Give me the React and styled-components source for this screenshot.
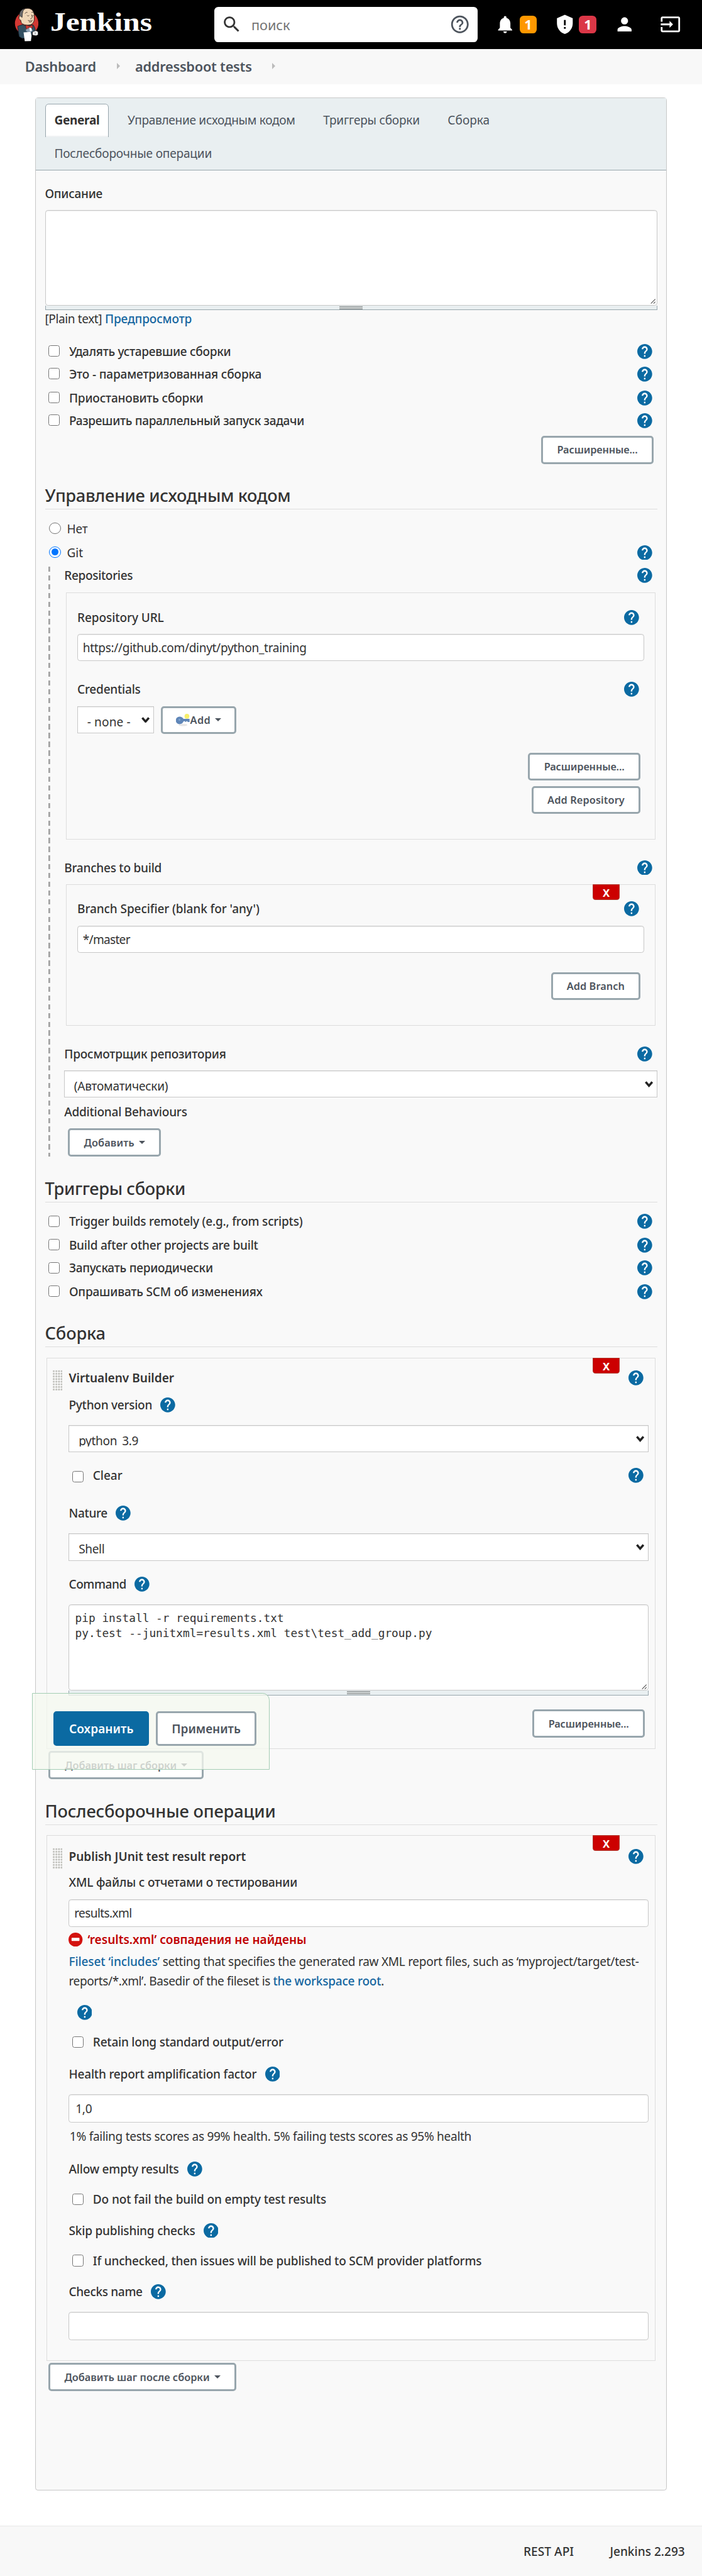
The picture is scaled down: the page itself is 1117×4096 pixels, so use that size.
import React from 'react';
import styled, { createGlobalStyle, css } from 'styled-components';

const u = (n) => `${+(n * 0.69815).toFixed(3)}px`;

const color = {
  text: '#333',
  muted: '#4d545d',
  link: '#1566a0',
  primary: '#0b6aa2',
  line: '#ddd',
  field: '#c8c8c8',
  steel: '#98a6ad',
  danger: '#c00000',
  panel: '#f9f9f9',
  tabs: '#e9eff1',
};

const GlobalStyle = createGlobalStyle`
  *, *::before, *::after { box-sizing: border-box; }
  body {
    margin: 0;
    background: #fff;
    color: ${color.text};
    font-family: "Noto Sans", "Open Sans", sans-serif;
  }
`;

/* ---------- text ---------- */

const Text = styled.span`
  font-size: ${(p) => u((p.$size || 28) * 0.975)};
  font-weight: ${(p) => p.$weight || 400};
  letter-spacing: ${(p) => p.$ls || 0}px;
  color: ${(p) => p.$color || 'inherit'};
  white-space: pre;
`;

const LabelText = styled(Text)`
  line-height: ${u(37)};
`;

const Label = ({ ls, weight = 500, children }) => (
  <LabelText $weight={weight} $ls={ls}>{children}</LabelText>
);

/* ---------- icons ---------- */

const Icon = styled.svg`
  display: block;
  flex: none;
  width: ${(p) => u(p.$w || 48)};
  height: ${(p) => u(p.$h || p.$w || 48)};
  fill: ${(p) => p.$fill || '#fff'};
`;

const HelpGlyph = styled(Icon)`
  margin-left: ${(p) => (p.$end ? 'auto' : u(p.$gap || 0))};
`;

const Help = ({ end, gap }) => (
  <HelpGlyph $w={34} $fill={color.primary} $end={end} $gap={gap} viewBox="2 2 20 20">
    <circle cx="12" cy="12" r="9" fill="#fff" />
    <path d="M12 2C6.48 2 2 6.48 2 12s4.48 10 10 10 10-4.48 10-10S17.52 2 12 2zm1 17h-2v-2h2v2zm2.07-7.75l-.9.92C13.45 12.9 13 13.5 13 15h-2v-.5c0-1.1.45-2.1 1.17-2.83l1.24-1.26c.37-.36.59-.86.59-1.41 0-1.1-.9-2-2-2s-2 .9-2 2H8c0-2.21 1.79-4 4-4s4 1.79 4 4c0 .88-.36 1.68-.93 2.25z" />
  </HelpGlyph>
);

const Butler = () => (
  <Icon $w={55} $h={76} viewBox="98 55 164 227">
    <circle cx="181" cy="158" r="80" fill="#d33833" />
    <path d="M120 178l35-12 10 8 60-6 12 22 3 20-20 8 -8 40-62 2-20-12z" fill="#335061" stroke="#1a2430" strokeWidth="4" />
    <path d="M178 190l30-10 14 30-22 14-24-14z" fill="#8fa3b5" />
    <path d="M198 184l14-2 4 26-12 4z" fill="#fff" />
    <path d="M134 104c-8 2-10 26 6 32l4 16c6 14 32 20 52 18 26-2 40-24 36-52 4-30-8-60-42-62-34 0-54 18-56 48z" fill="#f0d6b7" stroke="#2a1d18" strokeWidth="4" />
    <path d="M132 104c-2-22 14-42 36-46l-12 16-4 20-2 24-12-10z" fill="#6d6b6d" stroke="#231f20" strokeWidth="3" />
    <path d="M137 112c-10-2-12 20 2 24" fill="#f0d6b7" stroke="#2a1d18" strokeWidth="3" />
    <path d="M170 92c4-8 10-10 16-8M214 84c6-3 10-2 14 2M184 104c4 6 10 5 13 0M216 104c4 5 9 5 12 0M214 100c6 14 8 24-8 28M190 138c8 4 24 6 32-2M196 148c8 4 16 2 22-4" fill="none" stroke="#2a1d18" strokeWidth="3.5" />
    <path d="M174 170l26 8 20-9 2 22-20-6-24 12z" fill="#d33833" stroke="#5a1512" strokeWidth="3" />
    <path d="M160 220l48-3 6 26-4 36-42 1z" fill="#fff" />
    <path d="M222 216l22-8 14 8 1 20-14 6-24-4z" fill="#fff" stroke="#2a2a2a" strokeWidth="3" />
    <path d="M232 222l14 0M234 230l12 0" stroke="#444" strokeWidth="2.5" />
  </Icon>
);

const TriangleGlyph = styled.span`
  width: 0;
  height: 0;
  margin-left: ${u(10)};
  border: ${u(8)} solid transparent;
  border-top-color: ${color.muted};
  border-bottom: 0;
`;

const KeyIcon = () => (
  <Icon $w={32} $h={32} viewBox="0 0 32 32">
    <ellipse cx="16" cy="27" rx="10" ry="2.5" fill="#e6e6e6" />
    <path d="M8 8c5 0 8 3 9 5h14v7h-4l-2-2-3 2-3-2-2 1c-1 3-4 6-9 6a8 8 0 010-17z" fill="#5f86b8" />
    <circle cx="8" cy="15" r="2.4" fill="#7ea2cf" />
    <circle cx="25" cy="7" r="5.5" fill="#f7ef6a" />
  </Icon>
);

/* ---------- page chrome ---------- */

const Page = styled.div`
  position: relative;
  width: 100%;
  height: ${u(5867)};
  display: flex;
  flex-direction: column;
`;

const Header = styled.header`
  display: flex;
  align-items: center;
  flex: none;
  height: ${u(112)};
  padding-left: ${u(33)};
  background: #000;
`;

const Wordmark = styled.div`
  width: ${u(374)};
  margin-left: ${u(26)};
  margin-top: ${u(-10)};
  font: bold ${u(61)} / 1 "Liberation Serif", "Times New Roman", serif;
  color: #fff;
  transform: scaleX(1.16);
  transform-origin: left;
`;

const Search = styled.div`
  display: flex;
  align-items: center;
  width: ${u(600)};
  height: ${u(80)};
  padding: 0 ${u(16)};
  background: #fff;
  border-radius: ${u(9)};
`;

const SearchHint = styled(Text)`
  flex: 1;
  padding-left: ${u(21)};
  padding-top: ${u(2)};
  color: #757575;
`;

const HeaderItem = styled.div`
  display: flex;
  align-items: center;
  gap: ${u(8)};
  margin-left: ${(p) => u(p.$gap || 40)};
`;

const Badge = styled.span`
  display: flex;
  align-items: center;
  justify-content: center;
  width: ${u(40)};
  height: ${u(40)};
  border-radius: ${u(9)};
  background: ${(p) => p.$bg};
  color: #fff;
  font-size: ${u(31)};
  font-weight: 700;
  line-height: 1;
`;

const Breadcrumbs = styled.nav`
  display: flex;
  align-items: center;
  flex: none;
  height: ${u(80)};
  padding: 0 0 ${u(2)} ${u(57)};
  background: #f8f8f8;
  color: ${color.muted};
`;

const Crumb = styled.span`
  width: ${(p) => u(p.$w)};
  line-height: 1;
`;

const Separator = styled.span`
  width: ${u(42)};
  height: ${u(16)};
  &::before {
    content: '';
    display: block;
    width: 0;
    border: ${u(8)} solid transparent;
    border-left-color: #bbb;
    border-right: 0;
  }
`;

const Panel = styled.main`
  display: flex;
  flex-direction: column;
  flex: none;
  width: ${u(1440)};
  height: ${u(5450)};
  margin: ${u(30)} 0 0 ${u(80)};
  border: 1px solid ${color.field};
  border-radius: ${u(6)};
  background: ${color.panel};
`;

const Tabs = styled.div`
  display: flex;
  flex-wrap: wrap;
  align-content: flex-start;
  gap: 0 ${u(21)};
  flex: none;
  height: ${u(165)};
  padding: ${u(13)} ${u(21)} 0;
  border-bottom: 1.5px solid ${color.steel};
  background: ${color.tabs};
  color: ${color.muted};
`;

const Tab = styled.div`
  height: ${u(76)};
  padding: 0 ${u(20)};
  line-height: ${u(72)};
  border: 1px solid transparent;
  border-bottom: 0;
  ${(p) =>
    p.$active &&
    css`
      color: ${color.text};
      border-color: ${color.steel};
      border-radius: ${u(8)} ${u(8)} 0 0;
      background: linear-gradient(#fff 94%, #e9ecee);
    `}
`;

const Body = styled.div`
  display: flex;
  flex-direction: column;
  padding: 0 ${u(21)};
`;

const Footer = styled.footer`
  display: flex;
  justify-content: flex-end;
  flex: none;
  height: ${u(115)};
  margin-top: ${u(80)};
  padding: ${u(41)} ${u(39)} 0;
  gap: ${u(82)};
  border-top: 1px solid #e8e8e8;
  background: #f8f8f8;
`;

/* ---------- form parts ---------- */

const Row = styled.div`
  display: flex;
  align-items: flex-start;
  flex: none;
  height: ${(p) => u(p.$h || 34)};
  margin-top: ${(p) => u(p.$mt)};
  padding-left: ${(p) => u(p.$pl || 0)};
  padding-right: ${(p) => u(p.$pr === undefined ? 11 : p.$pr)};
  justify-content: ${(p) => (p.$end ? 'flex-end' : 'flex-start')};
`;

const Heading = styled.h2`
  flex: none;
  height: ${u(60)};
  margin: ${(p) => u(p.$mt)} 0 0;
  border-bottom: 1.5px solid ${color.line};
  font-weight: 500;
  font-size: ${u(39)};
  line-height: ${u(58)};
  letter-spacing: ${(p) => p.$ls}px;
`;

const CheckBox = styled.span`
  flex: none;
  width: ${u(26)};
  height: ${u(26)};
  margin: ${(p) => u(p.$drop || 3)} ${u(21)} 0 ${u(8)};
  border: 1.4px solid #767676;
  border-radius: ${u(5)};
  background: #fff;
`;

const RadioDot = styled.span`
  display: flex;
  align-items: center;
  justify-content: center;
  flex: none;
  width: ${u(26)};
  height: ${u(26)};
  margin: ${u(3)} ${u(14)} 0 ${u(10)};
  border: 1.4px solid ${(p) => (p.$on ? '#0075ff' : '#767676')};
  border-radius: 50%;
  background: #fff;
  &::before {
    content: '';
    width: ${u(16)};
    height: ${u(16)};
    border-radius: 50%;
    background: ${(p) => (p.$on ? '#0075ff' : 'transparent')};
  }
`;

const field = css`
  flex: none;
  border: 1px solid ${color.field};
  background: #fff;
  box-shadow: inset 0 1px 1px rgba(0, 0, 0, 0.075);
`;

const Input = styled.div`
  ${field}
  height: ${(p) => u(p.$h || 62)};
  margin-top: ${(p) => u(p.$mt)};
  padding-left: ${(p) => u(p.$pl || 11)};
  line-height: ${(p) => u((p.$h || 62) - 1)};
  border-radius: ${u(6)};
`;

const SelectBox = styled.div`
  ${field}
  display: flex;
  justify-content: space-between;
  width: ${(p) => (p.$w ? u(p.$w) : 'auto')};
  height: ${(p) => u(p.$h || 62)};
  margin-top: ${(p) => u(p.$mt || 0)};
  padding: 0 ${u(8)} 0 ${u(21)};
  line-height: ${u(69)};
`;

const Chevron = styled(Icon)`
  margin-top: ${u(23)};
  fill: none;
  stroke: #222;
  stroke-width: 5;
`;

const SelectValue = styled.div`
  height: ${(p) => (p.$clip ? u(46.5) : 'auto')};
  overflow: ${(p) => (p.$clip ? 'hidden' : 'visible')};
`;

const Select = ({ children, clip, ...rest }) => (
  <SelectBox {...rest}>
    <SelectValue $clip={clip}>{children}</SelectValue>
    <Chevron $w={19} $h={14} viewBox="0 0 19 14">
      <path d="M2 2l7.5 8.5L17 2" />
    </Chevron>
  </SelectBox>
);

const TextArea = styled.div`
  ${field}
  display: flex;
  flex-direction: column;
  height: ${(p) => u(p.$h)};
  margin-top: ${(p) => u(p.$mt)};
  border-radius: ${u(6)};
`;

const Code = styled.pre`
  flex: 1;
  margin: 0;
  padding: ${u(13)} 0 0 ${u(13)};
  font: ${u(25.5)} / ${u(34)} "DejaVu Sans Mono", monospace;
`;

const Grabber = styled(Icon)`
  margin: auto 1px 1px auto;
`;

const ResizeCorner = () => (
  <Grabber $w={12} viewBox="0 0 12 12">
    <path d="M11 1L1 11M11 7L7 11" stroke="#555" strokeWidth="1.6" fill="none" />
  </Grabber>
);

const ResizeBar = styled.div`
  display: flex;
  justify-content: center;
  align-items: center;
  flex: none;
  height: ${u(11)};
  border: 1px solid ${color.steel};
  border-top: 0;
  background: ${color.tabs};
  &::before {
    content: '';
    width: ${u(54)};
    height: ${u(7)};
    border: solid #8b8f8f;
    border-width: 1.5px 0;
    background: #c3c8c8;
  }
`;

const Button = styled.div`
  display: flex;
  align-items: center;
  justify-content: center;
  flex: none;
  width: ${(p) => u(p.$w)};
  height: ${(p) => u(p.$h || 64)};
  margin-left: ${(p) => u(p.$ml || 0)};
  border: 3px solid ${(p) => (p.$primary ? color.primary : color.steel)};
  border-radius: ${u(7)};
  background: ${(p) => (p.$primary ? color.primary : '#fff')};
  color: ${(p) => (p.$primary ? '#fff' : color.muted)};
`;

const ButtonText = ({ ls, size = 24, children }) => (
  <Text $size={size} $weight={600} $ls={ls}>{children}</Text>
);

const DashedGroup = styled.section`
  display: flex;
  flex-direction: column;
  flex: none;
  height: ${u(1344)};
  margin: ${u(15)} 0 0 ${u(8)};
  padding-left: ${u(36)};
  background: repeating-linear-gradient(#a3a3a3 0 ${u(12)}, transparent ${u(12)} ${u(19.93)}) 0 0 / ${u(4)} 100% no-repeat;
`;

const Box = styled.div`
  position: relative;
  display: flex;
  flex-direction: column;
  flex: none;
  height: ${(p) => u(p.$h)};
  margin: ${(p) => u(p.$mt)} ${u(4)} 0;
  padding: 0 ${u(24.5)};
  border: 1px solid ${color.line};
`;

const StepBox = styled(Box)`
  flex-direction: row;
  padding: 0 ${u(14.5)} 0 ${u(11)};
`;

const StepContent = styled.div`
  flex: 1;
  display: flex;
  flex-direction: column;
`;

const DragHandle = styled.span`
  flex: none;
  width: ${u(23)};
  height: ${u(48)};
  margin: ${(p) => u(p.$mt)} ${u(15)} 0 0;
  background: radial-gradient(circle at 60% 55%, #bdbdb8 0 ${u(1.6)}, transparent ${u(2.6)}) 0 0 / ${u(6)} ${u(6)};
`;

const DeleteButton = styled.div`
  position: absolute;
  top: -1px;
  right: ${u(80)};
  width: ${u(61)};
  height: ${u(36)};
  border: 1px solid #b03a2e;
  border-radius: 0 0 ${u(6)} ${u(6)};
  background: #c00;
  color: #fff;
  font-size: ${u(24)};
  font-weight: 700;
  line-height: ${u(37)};
  text-align: center;
`;

const Description = styled.div`
  flex: none;
  height: ${u(84)};
  margin-top: ${u(13)};
  line-height: ${u(42)};
  white-space: nowrap;
`;

const ErrorRow = styled(Row)`
  align-items: center;
  gap: ${u(11)};
`;

const SaveBar = styled.div`
  position: absolute;
  left: ${u(73)};
  top: ${u(3856)};
  display: flex;
  gap: ${u(16)};
  width: ${u(541)};
  height: ${u(174)};
  padding: ${u(40.5)} ${u(47.5)};
  border: 1px solid #a4cdb4;
  border-top-right-radius: ${u(16)};
  background: rgba(244, 249, 239, 0.77);
`;

const CheckRow = ({ mt, ls, drop, help, pr, children }) => (
  <Row $mt={mt} $pr={pr}>
    <CheckBox $drop={drop} />
    <Label ls={ls}>{children}</Label>
    {help && <Help end />}
  </Row>
);

const HelpRow = ({ mt, ls, children }) => (
  <Row $mt={mt}>
    <Label ls={ls}>{children}</Label>
    <Help end />
  </Row>
);

const InlineHelpRow = ({ mt, ls, children }) => (
  <Row $mt={mt}>
    <Label ls={ls}>{children}</Label>
    <Help gap={19} />
  </Row>
);

const Advanced = () => (
  <Button $w={256}>
    <ButtonText ls={-0.15}>Расширенные...</ButtonText>
  </Button>
);

/* ---------- sections ---------- */

const TopBar = () => (
  <Header>
    <Butler />
    <Wordmark>Jenkins</Wordmark>
    <Search>
      <Icon $fill="#333" viewBox="0 0 24 24">
        <path d="M15.5 14h-.79l-.28-.27C15.41 12.59 16 11.11 16 9.5 16 5.91 13.09 3 9.5 3S3 5.91 3 9.5 5.91 16 9.5 16c1.61 0 3.09-.59 4.23-1.57l.27.28v.79l5 4.99L20.49 19l-4.99-5zm-6 0C7.01 14 5 11.99 5 9.5S7.01 5 9.5 5 14 7.01 14 9.5 11.99 14 9.5 14z" />
      </Icon>
      <SearchHint $size={32} $ls={-0.1}>поиск</SearchHint>
      <Icon $fill={color.muted} viewBox="0 0 24 24">
        <path d="M11 18h2v-2h-2v2zm1-16C6.48 2 2 6.48 2 12s4.48 10 10 10 10-4.48 10-10S17.52 2 12 2zm0 18c-4.41 0-8-3.59-8-8s3.59-8 8-8 8 3.59 8 8-3.59 8-8 8zm0-14c-2.21 0-4 1.79-4 4h2c0-1.1.9-2 2-2s2 .9 2 2c0 2-3 1.75-3 5h2c0-2.25 3-2.5 3-5 0-2.21-1.79-4-4-4z" />
      </Icon>
    </Search>
    <HeaderItem>
      <Icon viewBox="0 0 24 24">
        <path d="M12 22c1.1 0 2-.9 2-2h-4c0 1.1.89 2 2 2zm6-6v-5c0-3.07-1.64-5.64-4.5-6.32V4c0-.83-.67-1.5-1.5-1.5s-1.5.67-1.5 1.5v.68C7.63 5.36 6 7.92 6 11v5l-2 2v1h16v-1l-2-2z" />
      </Icon>
      <Badge $bg="#ff9800">1</Badge>
    </HeaderItem>
    <HeaderItem>
      <Icon viewBox="0 0 24 24">
        <path fillRule="evenodd" d="M12 1L3 5v6c0 5.55 3.84 10.74 9 12 5.16-1.26 9-6.45 9-12V5l-9-4zM11 7h2v6h-2zM11 15h2v2h-2z" />
      </Icon>
      <Badge $bg="#db3747">1</Badge>
    </HeaderItem>
    <HeaderItem>
      <Icon viewBox="0 0 24 24">
        <path d="M12 12c2.21 0 4-1.79 4-4s-1.79-4-4-4-4 1.79-4 4 1.79 4 4 4zm0 2c-2.67 0-8 1.34-8 4v2h16v-2c0-2.66-5.33-4-8-4z" />
      </Icon>
    </HeaderItem>
    <HeaderItem $gap={56}>
      <Icon viewBox="0 0 24 24">
        <path d="M21 3.01H3c-1.1 0-2 .9-2 2V9h2V4.99h18v14.03H3V15H1v4.01c0 1.1.9 1.98 2 1.98h18c1.1 0 2-.88 2-1.98v-14c0-1.11-.9-2-2-2zM11 16l4-4-4-4v3H1v2h10v3z" />
      </Icon>
    </HeaderItem>
  </Header>
);

const General = () => (
  <>
    <Row $mt={36}><Label ls={-0.28}>Описание</Label></Row>
    <TextArea $mt={20.5} $h={217}><ResizeCorner /></TextArea>
    <ResizeBar />
    <Row $mt={2.5}>
      <Label weight={400} ls={-0.4}>[Plain text]</Label>
      <LabelText $weight={500} $ls={-0.13} $color={color.link}> Предпросмотр</LabelText>
    </Row>
    <CheckRow mt={40} ls={-0.27} help>Удалять устаревшие сборки</CheckRow>
    <CheckRow mt={18} ls={-0.16} help>Это - параметризованная сборка</CheckRow>
    <CheckRow mt={20} ls={-0.17} help>Приостановить сборки</CheckRow>
    <CheckRow mt={18} ls={-0.32} help>Разрешить параллельный запуск задачи</CheckRow>
    <Row $mt={17.5} $h={64} $pr={8} $end><Advanced /></Row>
  </>
);

const SourceControl = () => (
  <>
    <Heading $mt={43.5} $ls={-0.36}>Управление исходным кодом</Heading>
    <Row $mt={27}>
      <RadioDot />
      <Label weight={400} ls={0}>Нет</Label>
    </Row>
    <Row $mt={20}>
      <RadioDot $on />
      <Label weight={400} ls={0}>Git</Label>
      <Help end />
    </Row>
    <DashedGroup>
      <HelpRow mt={3} ls={-0.35}>Repositories</HelpRow>
      <Box $mt={21.5} $h={563}>
        <HelpRow mt={39} ls={-0.11}>Repository URL</HelpRow>
        <Input $mt={21}><Text $ls={-0.32}>https://github.com/dinyt/python_training</Text></Input>
        <HelpRow mt={47} ls={-0.24}>Credentials</HelpRow>
        <Row $mt={21} $h={64} $pr={0}>
          <Select $w={175}><Text $ls={0.14}>- none -</Text></Select>
          <Button $w={171} $ml={16}>
            <KeyIcon />
            <ButtonText ls={0.3}>Add</ButtonText>
            <TriangleGlyph />
          </Button>
        </Row>
        <Row $mt={42} $h={64} $pr={8} $end><Advanced /></Row>
        <Row $mt={12} $h={64} $pr={8} $end>
          <Button $w={248}><ButtonText ls={0.1}>Add Repository</ButtonText></Button>
        </Row>
      </Box>
      <HelpRow mt={47.5} ls={-0.25}>Branches to build</HelpRow>
      <Box $mt={21} $h={322}>
        <DeleteButton>X</DeleteButton>
        <HelpRow mt={37.5} ls={-0.11}>Branch Specifier (blank for 'any')</HelpRow>
        <Input $mt={21}><Text $ls={-0.7}>*/master</Text></Input>
        <Row $mt={44} $h={64} $pr={8} $end>
          <Button $w={204}><ButtonText ls={0.05}>Add Branch</ButtonText></Button>
        </Row>
      </Box>
      <HelpRow mt={47.5} ls={-0.18}>Просмотрщик репозитория</HelpRow>
      <Select $mt={20.5}><Text $ls={-0.23}>(Автоматически)</Text></Select>
      <Row $mt={15}><Label ls={-0.24}>Additional Behaviours</Label></Row>
      <Row $mt={21} $h={64} $pl={9}>
        <Button $w={211}>
          <ButtonText ls={0.1}>Добавить</ButtonText>
          <TriangleGlyph />
        </Button>
      </Row>
    </DashedGroup>
  </>
);

const Triggers = () => (
  <>
    <Heading $mt={44} $ls={-0.38}>Триггеры сборки</Heading>
    <CheckRow mt={27} ls={-0.23} help>Trigger builds remotely (e.g., from scripts)</CheckRow>
    <CheckRow mt={20} ls={-0.23} help>Build after other projects are built</CheckRow>
    <CheckRow mt={18} ls={-0.24} help>Запускать периодически</CheckRow>
    <CheckRow mt={20} ls={-0.18} help>Опрашивать SCM об изменениях</CheckRow>
  </>
);

const BuildSteps = () => (
  <>
    <Heading $mt={49} $ls={-0.13}>Сборка</Heading>
    <StepBox $mt={24} $h={891.5}>
      <DeleteButton>X</DeleteButton>
      <DragHandle $mt={26} />
      <StepContent>
        <Row $mt={27.5}>
          <Label weight={600} ls={0}>Virtualenv Builder</Label>
          <Help end />
        </Row>
        <InlineHelpRow mt={28} ls={-0.27}>Python version</InlineHelpRow>
        <Select $mt={29} clip><Text $ls={-0.34}>python_3.9</Text></Select>
        <CheckRow mt={35} ls={-0.07} drop={7} help>Clear</CheckRow>
        <InlineHelpRow mt={52} ls={-0.35}>Nature</InlineHelpRow>
        <Select $mt={29} $h={63}><Text $ls={-0.33}>Shell</Text></Select>
        <InlineHelpRow mt={36} ls={-0.43}>Command</InlineHelpRow>
        <TextArea $mt={29} $h={197}>
          <Code>{'pip install -r requirements.txt\npy.test --junitxml=results.xml test\\test_add_group.py'}</Code>
          <ResizeCorner />
        </TextArea>
        <ResizeBar />
        <Row $mt={32} $h={64} $pr={8} $end><Advanced /></Row>
      </StepContent>
    </StepBox>
    <Row $mt={4.5} $h={64} $pl={8}>
      <Button $w={354}>
        <ButtonText ls={-0.05}>Добавить шаг сборки</ButtonText>
        <TriangleGlyph />
      </Button>
    </Row>
  </>
);

const PostBuild = () => (
  <>
    <Heading $mt={44} $ls={-0.16}>Послесборочные операции</Heading>
    <StepBox $mt={24} $h={1197}>
      <DeleteButton>X</DeleteButton>
      <DragHandle $mt={27} />
      <StepContent>
        <Row $mt={29.5}>
          <Label weight={600} ls={0}>Publish JUnit test result report</Label>
          <Help end />
        </Row>
        <Row $mt={25.5}><Label ls={-0.17}>XML файлы с отчетами о тестировании</Label></Row>
        <Input $mt={21.5} $h={63}><Text $ls={-0.59}>results.xml</Text></Input>
        <ErrorRow $mt={12}>
          <Icon $w={32} viewBox="0 0 32 32">
            <circle cx="16" cy="16" r="16" fill="#d3120f" />
            <rect x="7" y="12" width="18" height="7" rx="1" fill="#fff" />
          </Icon>
          <Text $weight={600} $ls={0} $color={color.danger}>‘results.xml’ совпадения не найдены</Text>
        </ErrorRow>
        <Description>
          <Text $weight={500} $ls={-0.1} $color={color.link}>Fileset ‘includes’</Text>
          <Text $ls={-0.285}>{' setting that specifies the generated raw XML report files, such as ‘myproject/target/test-'}</Text>
          <br />
          <Text $ls={-0.4}>{'reports/*.xml’. Basedir of the fileset is '}</Text>
          <Text $weight={500} $ls={-0.25} $color={color.link}>the workspace root</Text>
          <Text>.</Text>
        </Description>
        <Row $mt={35}><Help gap={19} /></Row>
        <CheckRow mt={33} ls={-0.24} drop={4}>Retain long standard output/error</CheckRow>
        <InlineHelpRow mt={39} ls={-0.21}>Health report amplification factor</InlineHelpRow>
        <Input $mt={29} $h={65} $pl={14}><Text $ls={-0.3}>1,0</Text></Input>
        <Row $mt={14} $pl={2}>
          <Label weight={400} ls={-0.3}>1% failing tests scores as 99% health. 5% failing tests scores as 95% health</Label>
        </Row>
        <InlineHelpRow mt={40} ls={-0.2}>Allow empty results</InlineHelpRow>
        <CheckRow mt={35} ls={-0.16} drop={4}>Do not fail the build on empty test results</CheckRow>
        <InlineHelpRow mt={37} ls={-0.2}>Skip publishing checks</InlineHelpRow>
        <CheckRow mt={35} ls={-0.21} drop={4} pr={0}>If unchecked, then issues will be published to SCM provider platforms</CheckRow>
        <InlineHelpRow mt={37} ls={-0.34}>Checks name</InlineHelpRow>
        <Input $mt={29} $h={64} />
      </StepContent>
    </StepBox>
    <Row $mt={5} $h={64} $pl={8}>
      <Button $w={428}>
        <ButtonText ls={0}>Добавить шаг после сборки</ButtonText>
        <TriangleGlyph />
      </Button>
    </Row>
  </>
);

export default function App() {
  return (
    <Page>
      <GlobalStyle />
      <TopBar />
      <Breadcrumbs>
        <Crumb $w={209}><Text $size={32} $weight={600} $ls={-0.29}>Dashboard</Text></Crumb>
        <Separator />
        <Crumb $w={312}><Text $size={32} $weight={600} $ls={-0.26}>addressboot tests</Text></Crumb>
        <Separator />
      </Breadcrumbs>
      <Panel>
        <Tabs>
          <Tab $active><Text $weight={700} $ls={-0.32}>General</Text></Tab>
          <Tab><Text $ls={-0.29}>Управление исходным кодом</Text></Tab>
          <Tab><Text $ls={-0.23}>Триггеры сборки</Text></Tab>
          <Tab><Text>Сборка</Text></Tab>
          <Tab><Text $ls={-0.18}>Послесборочные операции</Text></Tab>
        </Tabs>
        <Body>
          <General />
          <SourceControl />
          <Triggers />
          <BuildSteps />
          <PostBuild />
        </Body>
      </Panel>
      <Footer>
        <Label ls={0.08}>REST API</Label>
        <Label ls={0.02}>Jenkins 2.293</Label>
      </Footer>
      <SaveBar>
        <Button $primary $w={218} $h={79}><ButtonText size={28} ls={0.05}>Сохранить</ButtonText></Button>
        <Button $w={228} $h={79}><ButtonText size={28} ls={-0.04}>Применить</ButtonText></Button>
      </SaveBar>
    </Page>
  );
}
